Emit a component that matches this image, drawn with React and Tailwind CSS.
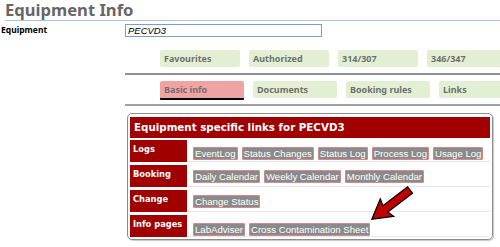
import React from 'react';

const topTabs = ['Favourites', 'Authorized', '314/307', '346/347'];
const subTabs = ['Basic info', 'Documents', 'Booking rules', 'Links'];

const rows = [
  { label: 'Logs', links: ['EventLog', 'Status Changes', 'Status Log', 'Process Log', 'Usage Log'], pad: 'pt-[7px]' },
  { label: 'Booking', links: ['Daily Calendar', 'Weekly Calendar', 'Monthly Calendar'], pad: 'pt-[5px]' },
  { label: 'Change', links: ['Change Status'], pad: 'pt-[5px]' },
  { label: 'Info pages', links: ['LabAdviser', 'Cross Contamination Sheet'], pad: 'pt-[8px]' },
];

const tahoma = { fontFamily: '"Noto Sans", sans-serif' };
const verdana = { fontFamily: '"DejaVu Sans", sans-serif' };
const arial = { fontFamily: '"Liberation Sans", Arial, sans-serif' };

const Tab = ({ text, active }) => (
  <div className="flex flex-col">
    <div
      style={tahoma}
      className={`h-[17px] rounded-t-[2px] pl-[4px] flex items-center text-[9px] font-bold text-[#6f6f6f] ${
        active ? 'bg-[#f0a3a3] w-[84px]' : 'bg-[#e3efd3] rounded-b-[2px]'
      }`}
    >
      {text}
    </div>
    {active && <div className="h-[2px] bg-black rounded-b-[1px]" />}
  </div>
);

const LinkButton = ({ text }) => (
  <span
    style={arial}
    className="inline-block h-[13px] bg-[#8a8a8a] border border-[#d48a8a] rounded-[1px] px-[1px] text-[9.6px] leading-[11px] text-white whitespace-nowrap"
  >
    {text}
  </span>
);

export default function App() {
  return (
    <div className="relative w-[500px] h-[247px] overflow-hidden bg-white">
      <div className="ml-[5px] h-[21px] border-b border-[#a9c2de] pt-[1px]">
        <h1 style={tahoma} className="text-[16.6px] font-bold leading-[18px] text-[#666666]">
          Equipment Info
        </h1>
      </div>

      <div className="flex items-start mt-[3px] h-[13px]">
        <div style={tahoma} className="w-[123px] pl-[1px] text-[8.5px] font-bold leading-[12px] text-black">
          Equipment
        </div>
        <div
          style={arial}
          className="ml-[2px] w-[197px] h-[13px] border border-[#7d9dc6] pl-[2px] text-[9.5px] italic leading-[11px] text-black"
        >
          PECVD3
        </div>
      </div>

      <div className="ml-[125px] mt-[13px]">
        <div className="flex gap-[9px] pl-[35px] h-[17px]">
          {topTabs.map((t) => (
            <div key={t} className="w-[80px] shrink-0">
              <Tab text={t} />
            </div>
          ))}
        </div>
        <div className="mt-[6px] border-b-2 border-[#8f8f8f]" />
        <div className="flex gap-[9px] pl-[35px] mt-[6px] h-[19px]">
          {subTabs.map((t, i) => (
            <div key={t} className="w-[84px] shrink-0">
              <Tab text={t} active={i === 0} />
            </div>
          ))}
        </div>
        <div className="mt-[4px] border-b-2 border-[#a0a0a0]" />
      </div>

      <div className="ml-[127px] mt-[7px] w-[366px] h-[127px] border border-[#8c8c8c] rounded-[5px] p-[2px] shadow-[1px_1px_1px_#c8c8c8]">
        <div
          style={verdana}
          className="h-[21px] mt-[1px] bg-[#a00000] pl-[4px] flex items-center text-[10.3px] font-bold text-white"
        >
          Equipment specific links for PECVD3
        </div>
        <div className="mt-[2px] flex flex-col gap-[3px]">
          {rows.map((r) => (
            <div key={r.label} className="flex h-[22px]">
              <div
                style={verdana}
                className="w-[57px] shrink-0 bg-[#a00000] pl-[3px] pt-[4px] text-[8.3px] font-bold leading-[10px] text-white"
              >
                {r.label}
              </div>
              <div className={`flex-1 flex gap-[4px] pl-[6px] ${r.pad} border-b border-[#e6e6e6]`}>
                {r.links.map((l) => (
                  <LinkButton key={l} text={l} />
                ))}
              </div>
            </div>
          ))}
        </div>
      </div>

      <svg
        className="absolute inset-0 pointer-events-none"
        width="500"
        height="247"
        viewBox="0 0 500 247"
      >
        <g transform="translate(410 190) rotate(142.6)">
          <path
            d="M0 -4 L31 -4 L29 -11 L48 0 L29 11 L31 4 L0 4 Z"
            fill="#c00000"
            stroke="#000"
            strokeWidth="1.3"
            strokeLinejoin="miter"
          />
        </g>
      </svg>
    </div>
  );
}
